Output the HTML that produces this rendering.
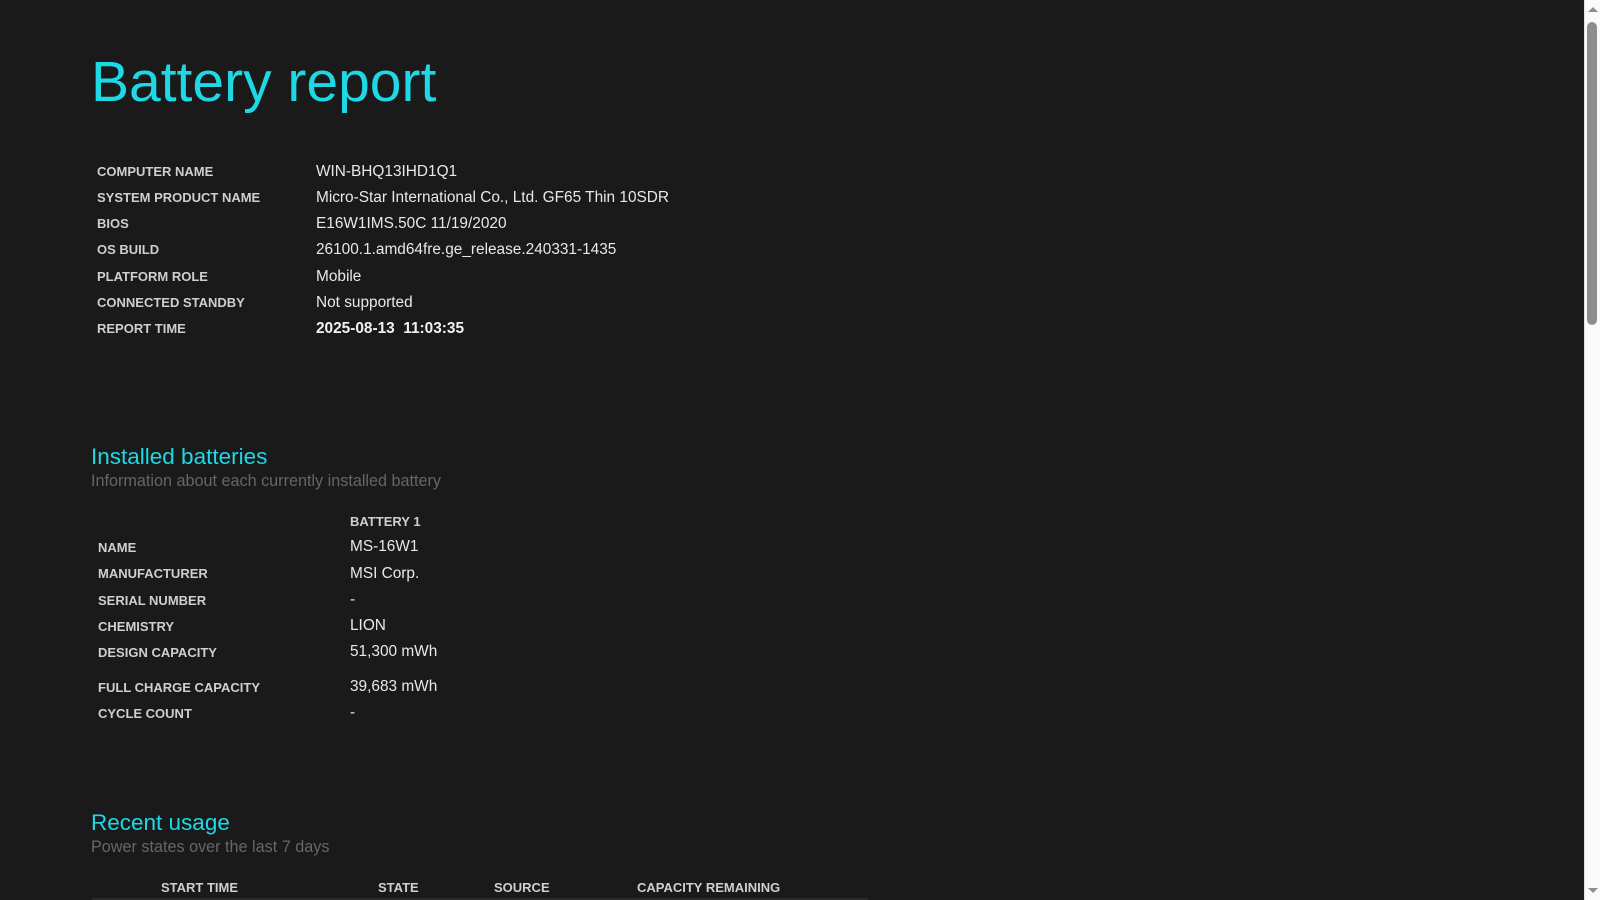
<!DOCTYPE html>
<html><head><meta charset="utf-8"><style>
html,body{margin:0;padding:0;}
body{width:1600px;height:900px;overflow:hidden;background:#1a1a1a;font-family:"Liberation Sans",sans-serif;position:relative;}
.a{position:absolute;white-space:nowrap;}
h1{position:absolute;left:91px;top:42px;margin:0;font-weight:normal;font-size:57px;color:#1ed8e6;line-height:80px;}
.l{position:absolute;left:97px;font-size:13px;font-weight:bold;color:#cfcfcf;}
.v{position:absolute;left:316px;font-size:15.4px;color:#e8e8e8;}
.h2{position:absolute;left:91px;font-size:22.5px;color:#1ed8e6;}
.sub{position:absolute;left:91px;font-size:16.2px;color:#666;}
.th{position:absolute;font-size:13px;font-weight:bold;color:#cfcfcf;}
</style></head><body>
<h1>Battery report</h1>
<div class="l" style="top:164px">COMPUTER NAME</div><div class="v" style="top:163px">WIN-BHQ13IHD1Q1</div>
<div class="l" style="top:190px">SYSTEM PRODUCT NAME</div><div class="v" style="top:189px">Micro-Star International Co., Ltd. GF65 Thin 10SDR</div>
<div class="l" style="top:216px">BIOS</div><div class="v" style="top:215px">E16W1IMS.50C 11/19/2020</div>
<div class="l" style="top:242px">OS BUILD</div><div class="v" style="top:241px">26100.1.amd64fre.ge_release.240331-1435</div>
<div class="l" style="top:269px">PLATFORM ROLE</div><div class="v" style="top:268px">Mobile</div>
<div class="l" style="top:295px">CONNECTED STANDBY</div><div class="v" style="top:294px">Not supported</div>
<div class="l" style="top:321px">REPORT TIME</div><div class="v" style="top:320px;font-weight:bold;color:#f2f2f2">2025-08-13&nbsp; 11:03:35</div>

<div class="h2" style="top:444px">Installed batteries</div>
<div class="sub" style="top:472px">Information about each currently installed battery</div>
<div class="l" style="top:514px;left:350px">BATTERY 1</div>
<div class="l" style="top:540px;left:98px">NAME</div><div class="v" style="left:350px;top:538px">MS-16W1</div>
<div class="l" style="top:566px;left:98px">MANUFACTURER</div><div class="v" style="left:350px;top:565px">MSI Corp.</div>
<div class="l" style="top:593px;left:98px">SERIAL NUMBER</div><div class="v" style="left:350px;top:591px">-</div>
<div class="l" style="top:619px;left:98px">CHEMISTRY</div><div class="v" style="left:350px;top:617px">LION</div>
<div class="l" style="top:645px;left:98px">DESIGN CAPACITY</div><div class="v" style="left:350px;top:643px">51,300 mWh</div>
<div class="l" style="top:680px;left:98px">FULL CHARGE CAPACITY</div><div class="v" style="left:350px;top:678px">39,683 mWh</div>
<div class="l" style="top:706px;left:98px">CYCLE COUNT</div><div class="v" style="left:350px;top:704px">-</div>

<div class="h2" style="top:810px">Recent usage</div>
<div class="sub" style="top:838px">Power states over the last 7 days</div>
<div class="th" style="top:880px;left:161px">START TIME</div>
<div class="th" style="top:880px;left:378px">STATE</div>
<div class="th" style="top:880px;left:494px">SOURCE</div>
<div class="th" style="top:880px;left:637px">CAPACITY REMAINING</div>
<div class="a" style="left:92px;top:898px;width:776px;height:2px;background:#2c2c2c"></div>

<div class="a" style="left:1584px;top:0;width:16px;height:900px;background:#fafafa;border-left:1px solid #e0e0e0;box-sizing:border-box"></div>
<div class="a" style="left:1587px;top:22px;width:10px;height:303px;background:#8e8e8e;border-radius:5px"></div>
<div class="a" style="left:1588px;top:7px;width:0;height:0;border-left:5px solid transparent;border-right:5px solid transparent;border-bottom:5px solid #8e8e8e"></div>
<div class="a" style="left:1588px;top:888px;width:0;height:0;border-left:5px solid transparent;border-right:5px solid transparent;border-top:5px solid #8e8e8e"></div>
</body></html>
